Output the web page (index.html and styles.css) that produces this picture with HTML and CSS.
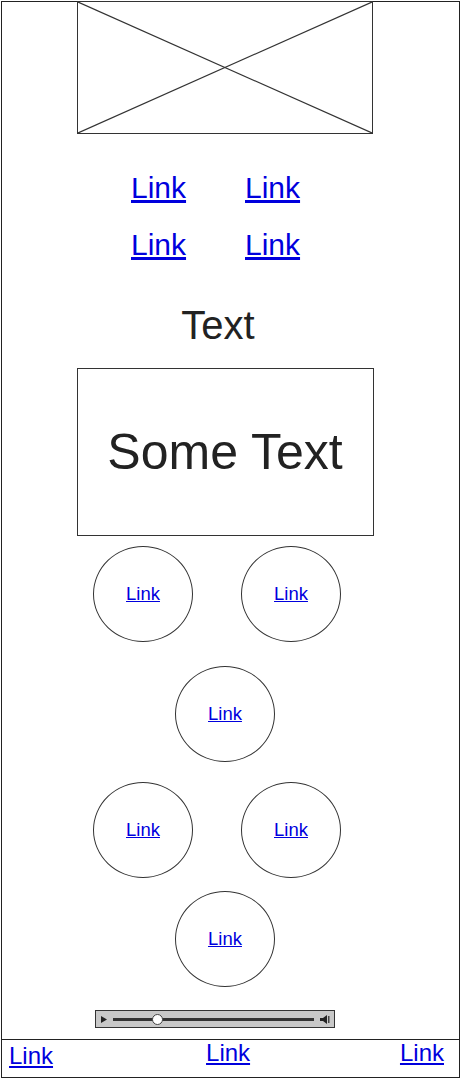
FILE: index.html
```html
<!DOCTYPE html>
<html lang="en">
<head>
<meta charset="utf-8">
<title>Wireframe</title>
<link rel="stylesheet" href="styles.css">
</head>
<body>
<div class="frame">
  <div class="placeholder">
    <svg class="cross" viewBox="0 0 294 131" preserveAspectRatio="none" width="294" height="131">
      <line x1="0" y1="0" x2="294" y2="131" stroke="#333" stroke-width="1.2"/>
      <line x1="294" y1="0" x2="0" y2="131" stroke="#333" stroke-width="1.2"/>
    </svg>
  </div>

  <div class="link-grid">
    <a href="#">Link</a>
    <a href="#">Link</a>
    <a href="#">Link</a>
    <a href="#">Link</a>
  </div>

  <div class="heading">Text</div>

  <div class="text-box">Some Text</div>

  <div class="circle-row row-1">
    <div class="circle"><a href="#">Link</a></div>
    <div class="circle"><a href="#">Link</a></div>
  </div>
  <div class="circle-row row-2">
    <div class="circle"><a href="#">Link</a></div>
  </div>
  <div class="circle-row row-3">
    <div class="circle"><a href="#">Link</a></div>
    <div class="circle"><a href="#">Link</a></div>
  </div>
  <div class="circle-row row-4">
    <div class="circle"><a href="#">Link</a></div>
  </div>

  <div class="player">
    <svg class="play" width="6" height="7" viewBox="0 0 6 7"><polygon points="0,0 6,3.5 0,7" fill="#222"/></svg>
    <div class="track"><span class="thumb"></span></div>
    <svg class="vol" width="10" height="9" viewBox="0 0 10 9"><polygon points="0,3 3,3 7,0 7,9 3,6 0,6" fill="#222"/><rect x="8" y="1" width="1.5" height="7" fill="#444"/></svg>
  </div>

  <div class="footer">
    <a href="#" class="f-left">Link</a>
    <a href="#" class="f-mid">Link</a>
    <a href="#" class="f-right">Link</a>
  </div>
</div>
</body>
</html>
```

FILE: styles.css
```css
* { box-sizing: border-box; }

html, body {
  margin: 0;
  padding: 0;
  background: #fff;
}

body {
  font-family: "Liberation Sans", Arial, sans-serif;
  color: #222;
}

a {
  color: #0000dd;
  text-decoration: underline;
}

.frame {
  margin: 1px 0 0 1px;
  width: 459px;
  height: 1077px;
  border: 1px solid #222;
  display: flex;
  flex-direction: column;
}

.placeholder {
  margin: -1px 0 0 75px;
  width: 296px;
  height: 133px;
  border: 1px solid #333;
}

.cross {
  display: block;
}

.link-grid {
  margin: 25px 0 0 129px;
  display: grid;
  grid-template-columns: 114px 114px;
  font-size: 30px;
  line-height: 57px;
}

.heading {
  margin: 32px 0 0 116px;
  width: 200px;
  text-align: center;
  font-size: 40px;
  line-height: 40px;
}

.text-box {
  margin: 23px 0 0 75px;
  width: 297px;
  height: 168px;
  border: 1px solid #333;
  display: flex;
  align-items: center;
  justify-content: center;
  font-size: 50px;
  padding-right: 1px;
}

.circle-row {
  display: flex;
  gap: 48px;
  margin-left: 91px;
}

.row-1 { margin-top: 10px; }
.row-2 { margin-top: 24px; margin-left: 173px; }
.row-3 { margin-top: 20px; }
.row-4 { margin-top: 13px; margin-left: 173px; }

.circle {
  width: 100px;
  height: 96px;
  border: 1px solid #333;
  border-radius: 50%;
  display: flex;
  align-items: center;
  justify-content: center;
  font-size: 18.5px;
}

.player {
  margin: 23px 0 0 93px;
  width: 240px;
  height: 18px;
  border: 1px solid #333;
  background: #c8c8c8;
  display: flex;
  align-items: center;
  padding: 0 4px 0 5px;
}

.play {
  flex: none;
  display: block;
}

.track {
  flex: 1;
  height: 3px;
  margin: 0 6px 0 6px;
  background: #333;
  position: relative;
}

.thumb {
  position: absolute;
  left: 39px;
  top: -4px;
  width: 11px;
  height: 11px;
  border-radius: 50%;
  background: #fff;
  border: 1px solid #444;
}

.vol {
  flex: none;
  display: block;
}

.footer {
  margin-top: auto;
  height: 38px;
  border-top: 1px solid #222;
  display: flex;
  align-items: flex-start;
  padding: 0 15px 0 7px;
  font-size: 24px;
  line-height: 26px;
}

.f-left {
  padding-top: 3px;
}

.f-mid {
  margin-left: 153px;
}

.f-right {
  margin-left: auto;
}
```
